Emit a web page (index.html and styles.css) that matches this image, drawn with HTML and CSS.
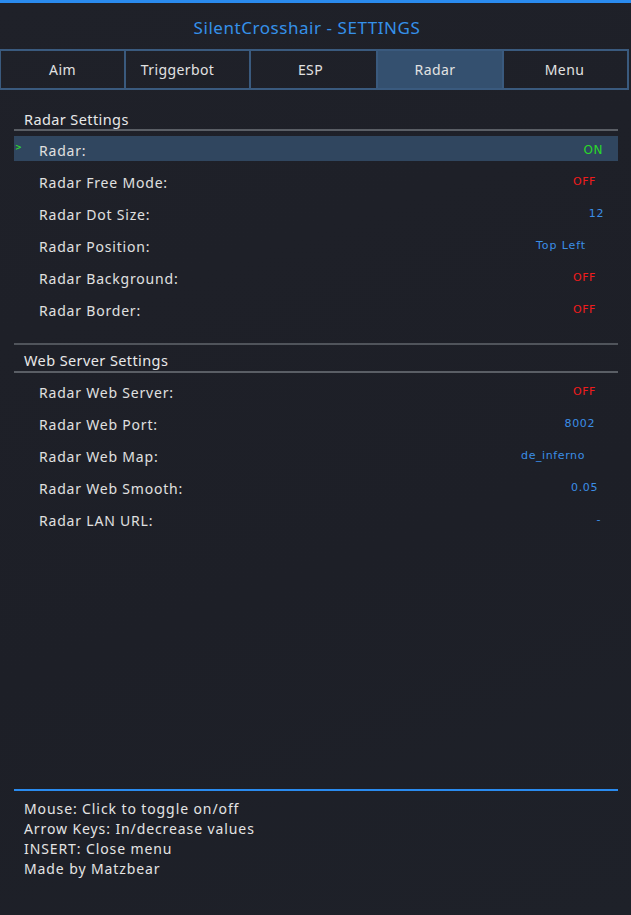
FILE: index.html
```html
<!DOCTYPE html>
<html>
<head>
<meta charset="utf-8">
<link rel="stylesheet" href="styles.css">
</head>
<body>
<div class="app">
  <div class="topbar"></div>
  <h1 class="title">SilentCrosshair - SETTINGS</h1>
  <nav class="tabs">
    <div class="tab">Aim</div>
    <div class="tab t-trigger">Triggerbot</div>
    <div class="tab t-esp">ESP</div>
    <div class="tab t-radar active">Radar</div>
    <div class="tab t-menu">Menu</div>
  </nav>
  <main class="content">
    <section class="section first">
      <div class="section-head">Radar Settings</div>
      <div class="row selected"><span class="marker">&gt;</span><span class="label">Radar:</span><span class="val on">ON</span></div>
      <div class="row"><span class="marker"></span><span class="label">Radar Free Mode:</span><span class="val off">OFF</span></div>
      <div class="row"><span class="marker"></span><span class="label">Radar Dot Size:</span><span class="val num v12">12</span></div>
      <div class="row"><span class="marker"></span><span class="label">Radar Position:</span><span class="val num vpos">Top Left</span></div>
      <div class="row"><span class="marker"></span><span class="label">Radar Background:</span><span class="val off">OFF</span></div>
      <div class="row"><span class="marker"></span><span class="label">Radar Border:</span><span class="val off">OFF</span></div>
    </section>
    <section class="section second">
      <div class="section-head">Web Server Settings</div>
      <div class="row"><span class="marker"></span><span class="label">Radar Web Server:</span><span class="val off">OFF</span></div>
      <div class="row"><span class="marker"></span><span class="label">Radar Web Port:</span><span class="val num vport">8002</span></div>
      <div class="row"><span class="marker"></span><span class="label">Radar Web Map:</span><span class="val num vmap">de_inferno</span></div>
      <div class="row"><span class="marker"></span><span class="label">Radar Web Smooth:</span><span class="val num vsmooth">0.05</span></div>
      <div class="row"><span class="marker"></span><span class="label">Radar LAN URL:</span><span class="val num vurl">-</span></div>
    </section>
  </main>
  <footer class="footer">
    <div>Mouse: Click to toggle on/off</div>
    <div>Arrow Keys: In/decrease values</div>
    <div>INSERT: Close menu</div>
    <div>Made by Matzbear</div>
  </footer>
</div>
</body>
</html>
```
FILE: styles.css
```css
* { box-sizing: border-box; }
html, body {
  margin: 0;
  padding: 0;
  background: #1e2028;
}
body {
  font-family: "Noto Sans", "Open Sans", sans-serif;
  color: #e4e4e4;
}
.app {
  width: 631px;
  height: 915px;
  display: flex;
  flex-direction: column;
  background: linear-gradient(160deg, #1f2129 0%, #1d1f27 60%, #1e2129 100%);
}
.topbar {
  height: 3px;
  background: #2a8bef;
}
.title {
  margin: 0;
  height: 46px;
  padding-right: 17px;
  font-size: 17px;
  font-weight: normal;
  color: #3591ea;
  text-align: center;
  line-height: 50px;
  letter-spacing: 0.55px;
}
.tabs {
  display: grid;
  grid-template-columns: 125px 125px 127px 126px 127px;
  width: 630px;
  height: 41px;
  margin-left: -1px;
  border: 2px solid #3a5a7e;
  border-left: none;
}
.tab {
  display: flex;
  align-items: center;
  justify-content: center;
  font-size: 14px;
  color: #e2e2e2;
  border-left: 2px solid #3a5a7e;
  letter-spacing: 0.4px;
  padding-bottom: 1px;
}
.t-trigger { padding-right: 20px; }
.t-esp { padding-right: 6px; }
.t-radar { padding-right: 10px; }
.t-menu { padding-right: 4px; }
.tab.active {
  background: #34506f;
}
.content {
  padding: 0 13px 0 14px;
}
.section.first {
  padding-top: 19px;
}
.section.second {
  margin-top: 22px;
  border-top: 2px solid #50545b;
}
.section-head {
  padding-left: 10px;
  font-size: 14.5px;
  line-height: 20px;
  height: 22px;
  color: #e8e8e8;
  border-bottom: 2px solid #5a5e65;
  margin-bottom: 5px;
  letter-spacing: 0.4px;
}
.section.second .section-head {
  height: 28px;
  line-height: 30px;
}
.row {
  display: flex;
  align-items: center;
  height: 25px;
  margin-bottom: 7px;
}
.row.selected {
  background: #30465f;
}
.marker {
  width: 25px;
  flex: none;
  font-family: "DejaVu Sans", sans-serif;
  font-size: 8px;
  color: #2fd62f;
  padding-left: 1px;
  align-self: flex-start;
  padding-top: 7px;
  font-weight: bold;
}
.label {
  flex: 1;
  font-size: 14px;
  line-height: 25px;
  padding-top: 3px;
  letter-spacing: 0.8px;
  color: #e0e0e0;
}
.val {
  font-family: "DejaVu Sans", sans-serif;
  font-size: 11px;
  letter-spacing: 0.6px;
  padding-top: 1px;
}
.val.on { color: #2ad82a; margin-right: 15px; font-size: 12px; padding-top: 2px; }
.val.off { color: #f01c1c; margin-right: 22px; }
.val.num { color: #3b8ee6; }
.v12 { margin-right: 14px; }
.vpos { margin-right: 32px; letter-spacing: 0.9px; }
.vport { margin-right: 23px; }
.vmap { margin-right: 33px; }
.vsmooth { margin-right: 20px; }
.vurl { margin-right: 17px; }
.footer {
  margin: auto 13px 0 14px;
  border-top: 2px solid #2a8bef;
  padding: 8px 0 36px 10px;
  font-size: 14px;
  line-height: 20px;
  letter-spacing: 0.9px;
  color: #e4e4e4;
}
```
